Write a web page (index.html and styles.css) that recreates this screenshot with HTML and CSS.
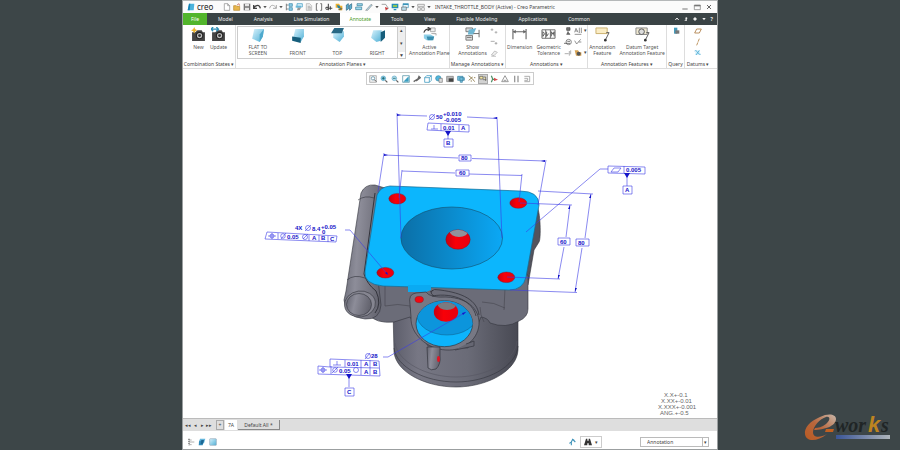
FILE: index.html
```html
<!DOCTYPE html>
<html lang="en">
<head>
<meta charset="utf-8">
<title>INTAKE_THROTTLE_BODY (Active) - Creo Parametric</title>
<link rel="stylesheet" href="styles.css">
</head>
<body>
<svg class="sprite" aria-hidden="true">
  <defs>
    <linearGradient id="ice" x1="0" y1="0" x2="1" y2="1"><stop offset="0" stop-color="#d8f2fc"/><stop offset="1" stop-color="#4fb0d6"/></linearGradient>
    <symbol id="i-logo" viewBox="0 0 12 12"><path d="M3 1h8l-1 10H1z" fill="#4bb3dc"/><path d="M3 1h2L4 11H1z" fill="#1782b4"/></symbol>
    <symbol id="i-new" viewBox="0 0 12 12"><path d="M2 1h5l3 3v7H2zM7 1v3h3" fill="#fff" stroke="#888"/></symbol>
    <symbol id="i-open" viewBox="0 0 12 12"><path d="M1 4h4l1 1h4v6H1z" fill="#e8b64b" stroke="#b9862a"/><path d="M6 3l3-2 1 3" fill="none" stroke="#c4553b"/></symbol>
    <symbol id="i-save" viewBox="0 0 12 12"><path d="M1 1h10v10H1z" fill="#777"/><path d="M3 1h6v4H3zM3 7h6v4H3z" fill="#e6e6e6"/></symbol>
    <symbol id="i-undo" viewBox="0 0 12 12"><path d="M1 3v5h5M1 8C4 2 10 2 11 8" fill="none" stroke="#444" stroke-width="2"/></symbol>
    <symbol id="i-redo" viewBox="0 0 12 12"><path d="M11 3v5H6M11 8C8 2 2 2 1 8" fill="none" stroke="#aaa" stroke-width="1.5"/></symbol>
    <symbol id="i-regen" viewBox="0 0 12 12"><path d="M2 1v10M2 3h3M2 9h3" stroke="#555" fill="none"/><path d="M6 1h5v4H6zM6 7h5v4H6z" fill="#8fd0ea" stroke="#3182a6"/></symbol>
    <symbol id="i-windows" viewBox="0 0 12 12"><path d="M3 1h8v5H3z" fill="#d8f1fb" stroke="#3694bd"/><path d="M1 4h8v3H1z" fill="#67b8da"/><path d="M4 7h5l-2 4H3z" fill="#999"/></symbol>
    <symbol id="i-page" viewBox="0 0 12 12"><path d="M2 1h5l3 3v7H2z" fill="#eee" stroke="#aaa"/><path d="M4 5h4M4 7h5M4 9h5" stroke="#999"/></symbol>
    <symbol id="i-braces" viewBox="0 0 12 12"><path d="M4 1H2v10h2M8 1h2v10H8" fill="none" stroke="#666" stroke-width="1.4"/></symbol>
    <symbol id="i-dim" viewBox="0 0 12 12"><path d="M5 1v10M1 7h4M5 8h6M8 5v5" fill="none" stroke="#444" stroke-width="1.6"/><circle cx="3" cy="8" r="2" fill="none" stroke="#444"/></symbol>
    <symbol id="i-model" viewBox="0 0 12 12"><path d="M1 1h5l2 3h3v7H6L5 7H1z" fill="#efb22f"/><path d="M3 3l4 1 2 5-5-2z" fill="#2683a8"/><path d="M8 8h3M5 10h5" stroke="#444"/></symbol>
    <symbol id="i-axis" viewBox="0 0 12 12"><path d="M2 11V3l3-2v8zM6 4l4-3v7l-3 3z" fill="#5cb1d2" stroke="#28637f"/></symbol>
    <symbol id="i-plane" viewBox="0 0 12 12"><path d="M3 1h8v3H3zM1 6h9v4H1z" fill="#9fdbef" stroke="#377c97"/></symbol>
    <symbol id="i-wand" viewBox="0 0 12 12"><path d="M1 11l8-9 2 1-7 8z" fill="#b4d9e8" stroke="#777" stroke-width=".8"/></symbol>
    <symbol id="i-sketch" viewBox="0 0 12 12"><path d="M1 2h6l4 6-4 3" fill="none" stroke="#777"/><path d="M6 6l5 2-4 3z" fill="#c33"/></symbol>
    <symbol id="i-screen" viewBox="0 0 12 12"><path d="M1 1h10v7H1zM4 9h4v2H4z" fill="#268fb7"/><path d="M3 3h6v3H3z" fill="#91c656"/></symbol>
    <symbol id="i-cube" viewBox="0 0 12 12"><path d="M1 4l3-3h7v7l-3 3H1z" fill="#fff" stroke="#218bb7"/><path d="M1 4h7v7M8 4l3-3" fill="none" stroke="#218bb7"/></symbol>
    <symbol id="i-wins" viewBox="0 0 12 12"><path d="M3 1h8v6H3z" fill="#e6f5fb" stroke="#3a93b8"/><path d="M1 6h7v5H1z" fill="#b9dfee" stroke="#666"/><path d="M3 2h8" stroke="#3a93b8" stroke-width="2"/></symbol>
    <symbol id="i-grid" viewBox="0 0 12 12"><path d="M1 2h10v3H1zM1 7h4v4H1zM7 7h4v4H7z" stroke="#888" fill="none"/></symbol>
    <symbol id="i-caret" viewBox="0 0 12 12"><path d="M1 3h10l-5 7z" fill="currentColor"/></symbol>
    <symbol id="i-up" viewBox="0 0 12 12"><path d="M1 9l5-6 5 6" fill="none" stroke="currentColor" stroke-width="3"/></symbol>
    <symbol id="i-min" viewBox="0 0 12 12"><path d="M2 9h8" stroke="#777" stroke-width="1.5"/></symbol>
    <symbol id="i-max" viewBox="0 0 12 12"><path d="M2 3h9v7H2z" fill="none" stroke="#777"/><path d="M2 4h9" stroke="#777" stroke-width="2"/></symbol>
    <symbol id="i-close" viewBox="0 0 12 12"><path d="M3 3l6 6M9 3l-6 6" stroke="#666" stroke-width="1.5"/></symbol>
    <symbol id="i-person" viewBox="0 0 12 12"><circle cx="7" cy="4" r="3" fill="currentColor"/><path d="M1 11l4-4h4v4z" fill="currentColor"/></symbol>
    <symbol id="i-gear" viewBox="0 0 12 12"><path d="M6 0l6 6-6 6-6-6z" fill="currentColor"/></symbol>
    <symbol id="i-camera" viewBox="0 0 14 14"><path d="M1 5h3l2-2h4l1 2h2v8H1z" fill="#444"/><circle cx="8" cy="8" r="3" fill="#bbb" stroke="#222"/><circle cx="8" cy="8" r="1.3" fill="#333"/></symbol>
    <symbol id="i-newcam" viewBox="0 0 14 14"><use href="#i-camera"/><path d="M3 0l1 2 2 1-2 1-1 2-1-2-2-1 2-1z" fill="#efb52f"/></symbol>
    <symbol id="i-updcam" viewBox="0 0 14 14"><use href="#i-camera"/><path d="M0 2h6M2 0L0 2l2 2M5 0l2 2-2 2" fill="none" stroke="#2d8db5" stroke-width="1.2"/></symbol>
    <symbol id="i-flat" viewBox="0 0 14 14"><path d="M4 1h9l-1 7-3 5-7-3z" fill="url(#ice)"/><path d="M9 6l4-5-1 7-3 5z" fill="#4ea9cd"/></symbol>
    <symbol id="i-front" viewBox="0 0 14 14"><path d="M5 1h8v7l-3 5-7-4z" fill="url(#ice)"/><path d="M2 8l8 1v5l-8-2z" fill="#165e7c"/></symbol>
    <symbol id="i-top" viewBox="0 0 14 14"><path d="M3 3h10v5l-4 5-6-4z" fill="url(#ice)"/><path d="M4 0h9l-2 5H1z" fill="#286884"/></symbol>
    <symbol id="i-right" viewBox="0 0 14 14"><path d="M3 2h8l-1 10-4 1-5-4z" fill="url(#ice)"/><path d="M10 4l4-2v7l-4 4z" fill="#165e7c"/></symbol>
    <symbol id="i-active" viewBox="0 0 16 16"><path d="M9 1h5v4H9zM10 7h5v2" fill="#eee" stroke="#aaa"/><path d="M2 6c1-3 3-4 6-4M6 0l3 2-3 2" fill="none" stroke="#444" stroke-width="1.3"/><path d="M2 8h7l4 2-2 4H5l-3-2z" fill="#8fd0e8"/><path d="M5 10h8l-1 4H6z" fill="#3a8eaf"/></symbol>
    <symbol id="i-show" viewBox="0 0 16 16"><path d="M1 1h7v4H1zM1 9h7v5H1z" fill="#ddd" stroke="#777"/><path d="M4 3l8-2-3 7H3z" fill="#6fb6d2"/><path d="M9 7h6M15 3v8M2 11h5" stroke="#666" fill="none"/></symbol>
    <symbol id="i-dimension" viewBox="0 0 16 16"><path d="M1 2v11M15 2v11M1 5h14" fill="none" stroke="#666" stroke-width="1.2"/><path d="M1 5l3-2v4zM15 5l-3-2v4z" fill="#666"/></symbol>
    <symbol id="i-gtol" viewBox="0 0 16 16"><path d="M1 3h14v9H1zM5 3v9M10 3v9" fill="#fff" stroke="#666"/><path d="M2 10V5l2 2zM6 5v5l2-3M11 10V5l2 3 1-3v5" fill="none" stroke="#555"/></symbol>
    <symbol id="i-note" viewBox="0 0 16 16"><path d="M1 1h12v6H1z" fill="#fbedc5" stroke="#c9ae6b"/><path d="M12 6h3l-4 8" fill="none" stroke="#555"/><circle cx="11" cy="14" r="1.4" fill="#333"/></symbol>
    <symbol id="i-target" viewBox="0 0 16 16"><path d="M1 1h12v7H1z" fill="#efe8d1" stroke="#888"/><circle cx="7" cy="5" r="3" fill="#ddd" stroke="#555"/><path d="M12 6h3l-4 8" fill="none" stroke="#555"/><circle cx="11" cy="14" r="1.4" fill="#333"/></symbol>
    <symbol id="i-arrows" viewBox="0 0 12 12"><path d="M1 4h4M3 2v4M7 8h4M9 6v4" stroke="#999" fill="none"/></symbol>
    <symbol id="i-minus" viewBox="0 0 12 12"><path d="M1 5h6M7 8h4M9 6v4" stroke="#999" stroke-width="1.2"/></symbol>
    <symbol id="i-eraser" viewBox="0 0 12 12"><path d="M2 9l5-6 4 2-5 5zM2 11h7" fill="#eee" stroke="#aaa"/></symbol>
    <symbol id="i-datum" viewBox="0 0 12 12"><path d="M4 1h5v4H4zM6 5v4M4 11l2-3 3 3z" fill="#777" stroke="#444"/></symbol>
    <symbol id="i-text" viewBox="0 0 12 12"><path d="M1 8l2-6 3 6M2 6h3M8 1v8M11 1v8M1 11h10" fill="none" stroke="#777" stroke-width="1.2"/></symbol>
    <symbol id="i-balloon" viewBox="0 0 12 12"><circle cx="7" cy="6" r="4" fill="none" stroke="#777" stroke-width="1.3"/><path d="M0 8h9M5 5h4" stroke="#555" stroke-width="1.2"/></symbol>
    <symbol id="i-finish" viewBox="0 0 12 12"><path d="M1 4l3 5 6-7M7 6h4" fill="none" stroke="#777" stroke-width="1.2"/></symbol>
    <symbol id="i-ord" viewBox="0 0 12 12"><path d="M1 7h6M8 3v7M10 2v6" stroke="#888" fill="none"/></symbol>
    <symbol id="i-sym" viewBox="0 0 12 12"><path d="M1 2h5l2 3h3v5H3z" fill="#d8a454"/><circle cx="7" cy="7" r="3" fill="#555"/></symbol>
    <symbol id="i-query" viewBox="0 0 12 12"><path d="M3 1h5v9H3z" fill="#459bbb"/><path d="M5 5h6v5H5z" fill="#777"/></symbol>
    <symbol id="i-dplane" viewBox="0 0 12 12"><path d="M4 3h7L8 9H1z" fill="none" stroke="#a9763b" stroke-width="1.2"/></symbol>
    <symbol id="i-daxis" viewBox="0 0 12 12"><path d="M8 1L4 11" stroke="#b58549" stroke-width="1.3" stroke-dasharray="5 1"/></symbol>
    <symbol id="i-dcurve" viewBox="0 0 12 12"><path d="M2 2h7v7H2z" fill="#d6f0fb"/><path d="M1 3c4-3 4 6 9 5M3 9l5-7" fill="none" stroke="#46a8d1" stroke-width="1.2"/></symbol>
    <symbol id="i-zoomfit" viewBox="0 0 12 12"><path d="M1 1h10v10H1z" fill="#eee" stroke="#999"/><circle cx="6" cy="5" r="2.5" fill="#fff" stroke="#47849d"/><path d="M8 7l3 3" stroke="#555" stroke-width="1.5"/></symbol>
    <symbol id="i-zoom" viewBox="0 0 12 12"><circle cx="5" cy="5" r="3.5" fill="#7cc4e0" stroke="#5fa7c4"/><path d="M3 5h4M5 3v4" stroke="#155"/><path d="M8 8l3 3" stroke="#555" stroke-width="1.8"/></symbol>
    <symbol id="i-zoomout" viewBox="0 0 12 12"><circle cx="5" cy="5" r="3.5" fill="#b1deee" stroke="#5fa7c4"/><path d="M3 5h4" stroke="#155"/><path d="M8 8l3 3" stroke="#555" stroke-width="1.8"/></symbol>
    <symbol id="i-repaint" viewBox="0 0 12 12"><path d="M1 1h10v10H1z" fill="#fff" stroke="#43899f"/><path d="M10 2v8H2z" fill="#3d9fc1"/></symbol>
    <symbol id="i-brush" viewBox="0 0 12 12"><path d="M1 10l6-4M7 7l2-5 2 2z" stroke="#666" stroke-width="2" fill="none"/></symbol>
    <symbol id="i-globe" viewBox="0 0 12 12"><circle cx="5" cy="5" r="4" fill="#52b6dc" stroke="#378ba8"/><path d="M6 5h5v6H6z" fill="#ddd" stroke="#777"/></symbol>
    <symbol id="i-photo" viewBox="0 0 12 12"><path d="M1 2h10v8H1z" fill="#bbb" stroke="#777"/><path d="M4 5h7v5H4z" fill="#444"/></symbol>
    <symbol id="i-view" viewBox="0 0 12 12"><path d="M1 2h8v6H1zM4 4h7v4H8v3H5z" fill="#79c4df" stroke="#337c9e"/></symbol>
    <symbol id="i-datums" viewBox="0 0 12 12"><path d="M1 1l5 4M1 8l6-5M6 5l4 5M9 4h2M4 9h2" stroke="#8c7949" fill="none" stroke-width="1.3"/></symbol>
    <symbol id="i-annot" viewBox="0 0 12 12"><path d="M1 2h5v4H1zM6 7h5M7 3h3v6" stroke="#555" fill="#f6e7a0"/></symbol>
    <symbol id="i-spin" viewBox="0 0 12 12"><path d="M2 1l2 5 3 1M4 6l-2 5" stroke="#4d8d64" fill="none" stroke-width="1.8"/><path d="M6 4l6 3-6 2z" fill="#d34a4a"/></symbol>
    <symbol id="i-tri" viewBox="0 0 12 12"><path d="M6 1l5 9H1zM4 8h4" fill="none" stroke="#999" stroke-width="1.5"/></symbol>
    <symbol id="i-pause" viewBox="0 0 12 12"><path d="M4 1v10M9 1v10" stroke="#999" stroke-width="2"/></symbol>
    <symbol id="i-step" viewBox="0 0 12 12"><path d="M2 2h8v8H2M2 5h5v3H2" fill="none" stroke="#999" stroke-width="1.2"/></symbol>
    <symbol id="i-tree" viewBox="0 0 12 12"><path d="M3 1v10" stroke="#666" stroke-dasharray="2 1" stroke-width="2" fill="none"/><path d="M3 3h4M3 6h8M3 10h4" stroke="#888"/></symbol>
    <symbol id="i-layers" viewBox="0 0 12 12"><path d="M3 1h8L9 8H1z" fill="#64b6dc"/><path d="M2 4h7l-2 7H1z" fill="#3089b8"/><path d="M5 3h4L7 9H4z" fill="#1d6793"/></symbol>
    <symbol id="i-blank" viewBox="0 0 12 12"><rect x="1" y="1" width="10" height="10" rx="1" fill="url(#ice)" stroke="#9ab"/></symbol>
    <symbol id="i-pick" viewBox="0 0 12 12"><path d="M5 11V6L2 8M5 6l2-4 3 2M7 2l4 4" fill="none" stroke="#3a91b8" stroke-width="1.6"/></symbol>
    <symbol id="i-find" viewBox="0 0 12 12"><path d="M3 1h2v3h2V1h2l3 10H7V8H5v3H0z" fill="#333"/></symbol>
  </defs>
</svg>

<div class="desk">
  <main class="window">
    <header class="title">
      <svg class="ico"><use href="#i-logo"/></svg><b class="brand">creo</b>
      <nav class="quick" aria-label="Quick access">
        <svg class="ico"><use href="#i-new"/></svg><svg class="ico"><use href="#i-open"/></svg><svg class="ico"><use href="#i-save"/></svg><svg class="ico"><use href="#i-undo"/></svg><svg class="car"><use href="#i-caret"/></svg><svg class="ico"><use href="#i-redo"/></svg><svg class="car"><use href="#i-caret"/></svg><svg class="ico"><use href="#i-regen"/></svg><svg class="ico"><use href="#i-windows"/></svg><svg class="ico"><use href="#i-page"/></svg><svg class="ico"><use href="#i-braces"/></svg><svg class="ico"><use href="#i-dim"/></svg><svg class="ico"><use href="#i-model"/></svg><svg class="ico"><use href="#i-axis"/></svg><svg class="ico"><use href="#i-plane"/></svg><svg class="ico"><use href="#i-wand"/></svg><svg class="car"><use href="#i-caret"/></svg><svg class="ico"><use href="#i-sketch"/></svg><svg class="ico"><use href="#i-screen"/></svg><svg class="ico"><use href="#i-wins"/></svg><svg class="car"><use href="#i-caret"/></svg><svg class="ico"><use href="#i-grid"/></svg><svg class="car"><use href="#i-caret"/></svg>
      </nav>
      <h1>INTAKE_THROTTLE_BODY (Active) - Creo Parametric</h1>
      <div class="winbtns">
        <button aria-label="Minimize"><svg class="ico"><use href="#i-min"/></svg></button>
        <button aria-label="Maximize"><svg class="ico"><use href="#i-max"/></svg></button>
        <button aria-label="Close"><svg class="ico"><use href="#i-close"/></svg></button>
      </div>
    </header>

    <nav class="tabs">
      <button class="file">File</button><button>Model</button><button>Analysis</button><button>Live Simulation</button><button class="on">Annotate</button><button>Tools</button><button>View</button><button>Flexible Modeling</button><button>Applications</button><button>Common</button>
      <span class="help"><svg class="car"><use href="#i-up"/></svg><svg class="car"><use href="#i-person"/></svg><svg class="car"><use href="#i-gear"/></svg><svg class="car"><use href="#i-caret"/></svg><b>?</b></span>
    </nav>

    <section class="ribbon">
      <div class="group">
        <div class="tools">
          <button><svg class="big"><use href="#i-newcam"/></svg>New</button>
          <button><svg class="big"><use href="#i-updcam"/></svg>Update</button>
        </div>
        <p>Combination States <i>▾</i></p>
      </div>
      <div class="group">
        <div class="tools planes">
          <div class="gallery">
            <button><svg class="big"><use href="#i-flat"/></svg>FLAT TO<br>SCREEN</button>
            <button><svg class="big"><use href="#i-front"/></svg><span>FRONT</span></button>
            <button><svg class="big"><use href="#i-top"/></svg><span>TOP</span></button>
            <button><svg class="big"><use href="#i-right"/></svg><span>RIGHT</span></button>
            <div class="scroll"><i>▴</i><i>▾</i><i class="more">▼</i></div>
          </div>
          <button><svg class="big"><use href="#i-active"/></svg>Active<br>Annotation Plane</button>
        </div>
        <p>Annotation Planes <i>▾</i></p>
      </div>
      <div class="group">
        <div class="tools">
          <button><svg class="big"><use href="#i-show"/></svg>Show<br>Annotations</button>
          <div class="stack"><svg class="ico"><use href="#i-arrows"/></svg><svg class="ico"><use href="#i-minus"/></svg><svg class="ico"><use href="#i-eraser"/></svg></div>
        </div>
        <p>Manage Annotations <i>▾</i></p>
      </div>
      <div class="group">
        <div class="tools">
          <button><svg class="big"><use href="#i-dimension"/></svg>Dimension</button>
          <button><svg class="big"><use href="#i-gtol"/></svg>Geometric<br>Tolerance</button>
          <div class="stack"><svg class="ico"><use href="#i-datum"/></svg><svg class="ico"><use href="#i-balloon"/></svg><svg class="ico"><use href="#i-ord"/></svg></div>
          <div class="stack"><svg class="ico"><use href="#i-text"/></svg><svg class="ico"><use href="#i-finish"/></svg><svg class="ico"><use href="#i-sym"/></svg></div>
          <div class="stack"><i>▾</i><i></i><i>▾</i></div>
        </div>
        <p>Annotations <i>▾</i></p>
      </div>
      <div class="group">
        <div class="tools">
          <button><svg class="big"><use href="#i-note"/></svg>Annotation<br>Feature</button>
          <button><svg class="big"><use href="#i-target"/></svg>Datum Target<br>Annotation Feature</button>
        </div>
        <p>Annotation Features <i>▾</i></p>
      </div>
      <div class="group">
        <div class="tools"><div class="stack"><svg class="ico"><use href="#i-query"/></svg></div></div>
        <p>Query</p>
      </div>
      <div class="group last">
        <div class="tools"><div class="stack"><svg class="ico"><use href="#i-dplane"/></svg><svg class="ico"><use href="#i-daxis"/></svg><svg class="ico"><use href="#i-dcurve"/></svg></div></div>
        <p>Datums <i>▾</i></p>
      </div>
    </section>

    <section class="canvas">
      <div class="viewbar">
        <svg class="ico"><use href="#i-zoomfit"/></svg><svg class="ico"><use href="#i-zoom"/></svg><svg class="ico"><use href="#i-zoomout"/></svg><svg class="ico"><use href="#i-repaint"/></svg><svg class="ico"><use href="#i-brush"/></svg><svg class="ico"><use href="#i-cube"/></svg><svg class="ico"><use href="#i-globe"/></svg><svg class="ico"><use href="#i-photo"/></svg><svg class="ico"><use href="#i-view"/></svg><svg class="ico"><use href="#i-datums"/></svg><svg class="ico pressed"><use href="#i-annot"/></svg><svg class="ico"><use href="#i-spin"/></svg><svg class="ico"><use href="#i-tri"/></svg><svg class="ico"><use href="#i-pause"/></svg><svg class="ico"><use href="#i-step"/></svg>
      </div>
      <svg class="model" viewBox="183 86 534 331">
        <defs>
          <linearGradient id="barrel"><stop offset="0" stop-color="#5d5e6b"/><stop offset=".2" stop-color="#777784"/><stop offset=".6" stop-color="#6a6b77"/><stop offset="1" stop-color="#484953"/></linearGradient>
          <linearGradient id="pipe" x1="0" y1="0" x2="1" y2=".2"><stop offset="0" stop-color="#62636f"/><stop offset=".4" stop-color="#8d8d99"/><stop offset="1" stop-color="#64646f"/></linearGradient>
          <linearGradient id="bore"><stop offset="0" stop-color="#0b6fa7"/><stop offset=".5" stop-color="#0b8bcd"/><stop offset="1" stop-color="#0ba8f5"/></linearGradient>
          <linearGradient id="redg"><stop offset="0" stop-color="#c80012"/><stop offset=".4" stop-color="#f80008"/><stop offset="1" stop-color="#e80010"/></linearGradient>
          <clipPath id="hole1"><ellipse cx="458" cy="239.500" rx="12.200" ry="9.800"/></clipPath>
          <clipPath id="hole2"><ellipse cx="446" cy="312" rx="12.200" ry="9.800"/></clipPath>
          <clipPath id="side"><ellipse cx="444.300" cy="323.700" rx="28.300" ry="23"/></clipPath>
        </defs>
        <g stroke="#33343c" stroke-width=".6">
          <path d="M536 205C541 210 541 240 539 242L534 250L528 285H520z" fill="#53545e"/>
          <path d="M393 310L394 352C396 372 425 387 456 387S517 371 518 350V300z" fill="url(#barrel)"/>
          <path d="M394 348C396 367 425 382 456 382S516 367 518 346" fill="none"/>
          <path d="M395 343C398 362 426 377 456 377S515 362 517 341" fill="none" stroke="#555661"/>
          <path d="M375 275L368 314Q376 324 394 322L410 317L428 346L468 348L481 317Q488 318 490 323Q506 329 519 321Q528 317 528 309V275z" fill="#6b6c78"/>
          <path d="M505 288L504 310M482 302Q494 302 505 308M385 285V306Q398 303 410 306M480 307Q480 315 484 322M410 307Q413 314 411 318" fill="none" stroke="#44454e"/>
          <path d="M361 193Q365 184 375 185L385 188L378 280L381 305Q380 320 365 319Q345 317 344 300L346 291z" fill="url(#pipe)"/>
          <path d="M375 193L364 274Q367 284 376 291Q382 304 375 313" fill="none" stroke-width="1"/>
          <path d="M358 200Q365 195 374 198M347 280Q354 274 365 278" fill="none"/>
          <ellipse cx="360" cy="304" rx="15.500" ry="13" fill="#858590" transform="rotate(-8 360 304)"/>
          <ellipse cx="359" cy="304.500" rx="12.500" ry="11" fill="url(#pipe)"/>
        </g>
        <path d="M390 186L520 191Q539 191 539 205L526 277Q523 290 509 290L383 286Q363 284 365 271L377 195Q380 187 390 186z" fill="#0cb6fd" stroke="#176a90" stroke-width=".7"/>
        <path d="M408 285h23v5l-5 2h-18z" fill="#0aaaf2"/>
        <ellipse cx="451.700" cy="238" rx="50.800" ry="31" fill="url(#bore)" stroke="#144f6b" stroke-width=".6"/>
        <g fill="url(#redg)" stroke="#7c1420" stroke-width=".4">
          <ellipse cx="397.300" cy="198.700" rx="8.500" ry="5.300"/><ellipse cx="518.300" cy="203" rx="8.500" ry="5.300"/><ellipse cx="385.300" cy="272.700" rx="8.500" ry="5.300"/><ellipse cx="506.300" cy="277.300" rx="8.500" ry="5.300"/>
          <ellipse cx="458" cy="239.500" rx="12.200" ry="9.800"/>
        </g>
        <ellipse cx="459" cy="231" rx="9.500" ry="6" fill="#92929a" clip-path="url(#hole1)"/>
        <g stroke="#34353d" stroke-width=".7">
          <path d="M410 304Q408 294 416 293L426 292Q430 298 446 297C471 298 480 312 479 325C477 341 463 351 446 350C427 349 410 334 411 317z" fill="#777884"/>
          <path d="M430 292Q434 288 440 290C463 293 477 300 479 315M432 296C455 292 473 302 476 316M433 290Q429 293 434 296" fill="none" stroke-width=".8"/>
          <path d="M455 350L474 346V341L466 344" fill="#666773"/>
          <ellipse cx="444.300" cy="323.700" rx="28.300" ry="23" fill="#0db4fc"/>
        </g>
        <ellipse cx="447" cy="315" rx="30" ry="20" fill="#0c95dc" stroke="#135f88" stroke-width=".5" clip-path="url(#side)"/>
        <ellipse cx="446" cy="312" rx="12.200" ry="9.800" fill="url(#redg)"/>
        <ellipse cx="447" cy="304" rx="9.500" ry="6" fill="#7a7a80" clip-path="url(#hole2)"/>
        <ellipse cx="419.200" cy="299.500" rx="4.200" ry="3.200" fill="#f40610" stroke="#741a25" stroke-width=".4"/>
        <path d="M427 347H440V356Q441 364 436 369Q431 371 428 368z" fill="url(#pipe)" stroke="#34353d" stroke-width=".7"/>
        <ellipse cx="438.500" cy="359" rx="1.500" ry="3" fill="#e11525"/>

        <g class="dims" fill="none" stroke="#3b3be6" stroke-width=".6">
          <path d="M397 113L401 238M497 117L502 238M397 115L427 116M467 117L497 118.500M384 153L378 192M546 160L538 205M384 155L458 158M472 158.500L545 161M402 170L399 198M522 174L519 202M402 171L455 173M469 174L522 175.500"/>
          <path d="M538 191L593 194M520 203L572 205M507 277L560 279M510 290L577 292.500M570 205L566 237M564 247L558 279M591 194L585 238M582 248L575 292M526 232L600 169H608M345 230H350L388 275M383 357H388L466 312"/>
          <path d="M448 131V139M627 174V186M349 375V387"/>
          <path d="M428 123L469 125V132L427 130zM441 124V131M459 125V131M608 166L645 167V174L608 173zM624 166V173M267 232L337 236L336 242L265 239zM278 233V239M309 235V241M319 235V241M328 236V242M330 359L379 361L380 376L318 374V366L330 367zM330 367L379 368M345 360V367M361 360V375M370 360V375M331 366V374"/>
          <path d="M459 155h12v6h-12zM456 170h13v6h-13zM558 238h12v7h-12zM576 239h13v7h-13zM444 139h9v8h-9zM623 186h9v8h-9zM345 388h9v8h-9z" fill="#fff"/>
          <path d="M434 125V129M431 129H438M611 172L614 168H621L618 172zM337 361V365M333 365H341"/>
          <circle cx="432" cy="117" r="2.500"/><path d="M429 120L435 114M305 231L311 225M281 239L286 233M303 239L308 234M365 359L370 353M332 373L338 367"/>
          <circle cx="308" cy="228" r="2.500"/><circle cx="283" cy="236" r="2.300"/><circle cx="305" cy="237" r="2.500"/><circle cx="368" cy="356" r="2.500"/><circle cx="335" cy="370" r="2.300"/><circle cx="356" cy="370" r="2.500"/>
          <circle cx="272" cy="236" r="2"/><path d="M268 236H276M272 233V239M319 370H327M323 367V373"/><circle cx="323" cy="370" r="2"/>
        </g>
        <path d="M445 131h6l-3 5zM624 173h6l-3 5zM346 374h6l-3 5zM397 114l4 1-4 1zM497 117l-4 1 4 1zM384 154l4 1-4 1zM545 160l-4 1 4 1zM570 205l-2 4h2zM558 279v-4h2zM591 194l-2 4h2zM575 292v-4h2zM466 312l-4 1 1 2zM388 275l-3-2 2-1z" fill="#1414c8"/>
        <g class="dimtext">
          <text x="436" y="119">50</text><text x="443" y="116">+0.010</text><text x="444" y="122">-0.005</text>
          <text x="443" y="130">0.01</text><text x="461" y="130">A</text><text x="446" y="145">B</text>
          <text x="461" y="160">80</text><text x="459" y="175">60</text><text x="560" y="244">60</text><text x="578" y="245">80</text>
          <text x="626" y="172">0.005</text><text x="625" y="192">A</text>
          <text x="295" y="230">4X</text><text x="312" y="231">8.4</text><text x="321" y="229">+0.05</text><text x="322" y="234">0</text>
          <text x="287" y="239">0.05</text><text x="312" y="240">A</text><text x="321" y="240">B</text><text x="330" y="241">C</text>
          <text x="371" y="358">28</text><text x="347" y="366">0.01</text><text x="364" y="366">A</text><text x="373" y="366">B</text>
          <text x="339" y="373">0.05</text><text x="364" y="374">A</text><text x="373" y="374">B</text><text x="347" y="394">C</text>
        </g>
        <g class="tol">
          <text x="664" y="397">X.X+-0.1</text><text x="661" y="403">X.XX+-0.01</text><text x="658" y="409">X.XXX+-0.001</text><text x="660" y="415">ANG.+-0.5</text>
        </g>
      </svg>
    </section>

    <nav class="sheets">
      <button class="step">◂◂</button><button class="step">◂</button><button class="step">▸</button><button class="step">▸▸</button><button class="add">+</button><button class="cur">7A</button><button class="sheet">Default All *</button>
    </nav>

    <footer class="status">
      <svg class="mid"><use href="#i-tree"/></svg><svg class="mid"><use href="#i-layers"/></svg><svg class="mid"><use href="#i-blank"/></svg>
      <div class="right">
        <svg class="mid"><use href="#i-pick"/></svg>
        <button class="find" aria-label="Find"><svg class="mid"><use href="#i-find"/></svg><i>▾</i></button>
        <span class="filter"><select aria-label="Selection filter"><option>Annotation</option></select><i>▾</i></span>
      </div>
    </footer>
  </main>

  <aside class="mark">
    <svg viewBox="0 0 92 34" role="img" aria-label="e-works">
      <defs>
        <linearGradient id="ember" x1="0" y1="1" x2="1" y2="0"><stop offset="0" stop-color="#b85a22"/><stop offset=".5" stop-color="#b9673d"/><stop offset="1" stop-color="#c8b7aa"/></linearGradient>
        <linearGradient id="bar"><stop offset="0" stop-color="#3a5597"/><stop offset="1" stop-color="#aeb5bb"/></linearGradient>
      </defs>
      <path d="M12 17C22 17 34 13 34 6C34 1 26 0 18 4C8 8 2 15 3 21C4 29 15 29 25 21C18 25 11 25 11 19C11 13 18 6 24 4C29 3 28 8 24 11C20 14 16 15 13 15z" fill="url(#ember)"/>
      <path d="M24 16h8l-1 3h-8z" fill="#c15f20"/>
      <rect x="34" y="22" width="54" height="4" fill="url(#bar)"/>
      <text class="wor" x="33" y="19">wor</text><text class="k" x="66" y="19">k</text><text class="wor" x="79" y="19">s</text>
    </svg>
  </aside>
</div>
</body>
</html>
```
FILE: styles.css
```css
* { box-sizing: border-box; }
body {
  margin: 0;
  background: #3d4648;
  color: #444;
  font: 5px/6px "Noto Sans", "Open Sans", sans-serif;
}
button, select {
  margin: 0;
  padding: 0;
  border: 0;
  background: none;
  color: inherit;
  font: inherit;
}
i { font-style: normal; }
svg { display: block; flex: none; }
.sprite { position: absolute; width: 0; height: 0; }
.ico { width: 8px; height: 8px; }
.car { width: 4px; height: 4px; }
.mid { width: 8px; height: 8px; }
.big { width: 15px; height: 15px; }

.desk {
  display: grid;
  grid-template-columns: 182px minmax(0, 1fr) 182px;
  min-height: 100vh;
}
.window {
  grid-column: 2;
  display: flex;
  flex-direction: column;
  border: 1px solid #9b9fa0;
  border-top-color: #b5b8b9;
  background: #fff;
}

.title {
  display: flex;
  align-items: center;
  height: 12px;
  padding: 0 4px;
  background: #fbfbfb;
}
.brand { width: 26px; margin-left: 2px; font-size: 8px; font-weight: 400; color: #222; }
.quick { display: flex; align-items: center; gap: 2px; color: #555; }
.title h1 { margin: 0 0 0 4px; font-size: 5px; font-weight: 400; }
.winbtns { display: flex; gap: 4px; margin-left: auto; }

.tabs { display: flex; gap: 1px; height: 12px; background: #3a4345; color: #eee; }
.tabs button { padding: 0 10px; white-space: nowrap; }
.tabs .file { background: #52b52c; color: #fff; padding: 0 8px; }
.tabs .on { background: #fff; color: #4c9b27; padding: 0 9px; }
.help { display: flex; align-items: center; gap: 5px; margin-left: auto; padding-right: 4px; }

.ribbon {
  display: grid;
  grid-template-columns: 53px 214px 56px 82px 79px 18px 1fr;
  height: 44px;
  border-bottom: 1px solid #ddd;
}
.group { display: flex; flex-direction: column; border-right: 1px solid #ddd; }
.group.last { padding-right: 6px; border-right: 0; }
.group p { margin: 2px 0 0; text-align: center; white-space: nowrap; }
.tools { display: flex; justify-content: center; height: 34px; padding-top: 2px; gap: 2px; }
.tools button {
  display: flex;
  flex-direction: column;
  align-items: center;
  padding: 0 1px;
  white-space: nowrap;
  text-align: center;
  color: #555;
}
.tools button .big { margin-bottom: 2px; }
.stack { display: flex; flex-direction: column; gap: 3px; }
.stack i { height: 8px; }
.planes { justify-content: space-between; padding: 1px 1px 0 1px; }
.planes > button { padding-top: 1px; }
.gallery { display: flex; flex: none; width: 169px; border: 1px solid #ccc; }
.gallery button { flex: 1; padding-top: 1px; }
.gallery button .big { margin-bottom: 1px; }
.gallery button span { margin-top: 6px; }
.scroll {
  display: flex;
  flex-direction: column;
  justify-content: space-between;
  width: 8px;
  border-left: 1px solid #ccc;
  background: #eee;
  text-align: center;
}
.scroll .more { background: #fff; }

.canvas { flex: 1; display: flex; flex-direction: column; }
.viewbar {
  align-self: center;
  display: flex;
  align-items: center;
  gap: 3px;
  height: 13px;
  margin: 3px 0 1px;
  padding: 0 2px;
  border: 1px solid #ccc;
}
.pressed { background: #d2d2d2; outline: 1px solid #aaa; }
.model { width: 100%; height: auto; }
.dimtext { font: bold 6px "Liberation Sans", Arial, sans-serif; fill: #1414c8; }
.tol { font: 6px "Liberation Sans", Arial, sans-serif; fill: #666; }

.sheets {
  display: flex;
  align-items: stretch;
  height: 13px;
  padding: 1px 2px;
  gap: 1px;
  border-top: 1px solid #bbb;
  background: #dedede;
}
.step { width: 6px; }
.add { width: 8px; margin-left: 3px; border: 1px solid #aaa; }
.cur { width: 12px; background: #fff; }
.sheet { width: 42px; border: solid #888; border-width: 0 1px 1px 0; }

.status { display: flex; align-items: center; gap: 3px; height: 18px; padding: 3px 4px 0; }
.right { display: flex; align-items: center; gap: 4px; margin-left: auto; }
.find { display: flex; align-items: center; gap: 3px; height: 12px; padding: 0 3px; border: 1px solid #ccc; }
.filter { display: flex; width: 69px; height: 10px; margin: 0 4px 0 34px; border: 1px solid #bbb; }
.filter select { flex: 1; padding-left: 6px; appearance: none; }
.filter i { width: 6px; border-left: 1px solid #bbb; text-align: center; line-height: 8px; }

.mark { align-self: end; justify-self: end; width: 98px; padding: 0 6px 3px 0; }
.wor { font: italic bold 20px "Liberation Serif", serif; fill: #202526; }
.k { font: italic bold 22px "Liberation Sans", sans-serif; fill: #bd8420; }
```
